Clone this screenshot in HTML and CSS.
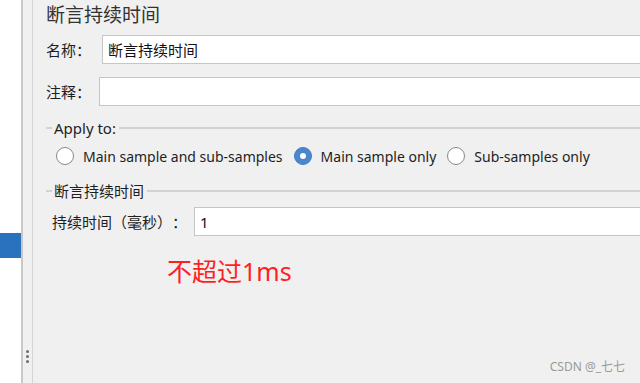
FILE: index.html
```html
<!DOCTYPE html>
<html lang="zh-CN">
<head>
  <meta charset="UTF-8">
  <title>断言持续时间</title>
  <link rel="stylesheet" href="styles.css">
</head>
<body>
  <div class="frame">
    <div class="tree">
      <div class="tree-sel"></div>
    </div>
    <div class="split">
      <span class="dot"></span><span class="dot"></span><span class="dot"></span>
    </div>
    <div class="panel">
      <h1 class="title">断言持续时间</h1>

      <div class="row name-row">
        <label class="label">名称：</label>
        <input class="field" type="text" value="断言持续时间">
      </div>
      <div class="row comment-row">
        <label class="label">注释：</label>
        <input class="field" type="text" value="">
      </div>

      <div class="group apply">
        <div class="group-title"><span class="tick"></span><span class="legend">Apply to:</span><span class="rule"></span></div>
        <div class="radios">
          <span class="radio"></span><span class="radio-text">Main sample and sub-samples</span>
          <span class="radio checked"></span><span class="radio-text">Main sample only</span>
          <span class="radio"></span><span class="radio-text">Sub-samples only</span>
        </div>
      </div>

      <div class="group duration">
        <div class="group-title"><span class="tick"></span><span class="legend cjk">断言持续时间</span><span class="rule"></span></div>
        <div class="row dur-row">
          <label class="label">持续时间（毫秒）：</label>
          <input class="field" type="text" value="1">
        </div>
      </div>

      <div class="note">不超过1ms</div>
    </div>
  </div>
  <div class="mark">CSDN @_七七</div>
</body>
</html>
```

FILE: styles.css
```css
html, body {
  margin: 0;
  height: 383px;
  overflow: hidden;
}

body {
  background: #f0f0f0;
  color: #1e1e1e;
  font-family: "Noto Sans", "Noto Sans CJK SC", sans-serif;
  font-size: 15px;
}

.frame {
  display: flex;
  height: 383px;
}

.tree {
  width: 21px;
  background: #fff;
  border-right: 2px solid #c9c9c9;
}

.tree-sel {
  margin-top: 233px;
  height: 25px;
  background: #2a72bd;
}

.split {
  width: 10px;
  border-right: 1px solid #d4d4d4;
  display: flex;
  flex-direction: column;
  align-items: center;
  gap: 2px;
  padding-top: 350px;
  box-sizing: border-box;
}

.dot {
  width: 3px;
  height: 3px;
  border-radius: 50%;
  background: #6e6e6e;
}

.panel {
  flex: 1;
  padding-left: 13px;
  overflow: hidden;
}

.title {
  margin: 0;
  font-family: "Noto Sans CJK SC", sans-serif;
  font-size: 19px;
  font-weight: normal;
  line-height: 27px;
  color: #333;
}

.row {
  display: flex;
  align-items: center;
}

.label, .cjk {
  flex: none;
  font-family: "Noto Sans CJK SC", sans-serif;
  font-size: 15px;
  text-spacing-trim: space-all;
}

.field {
  flex: 1;
  height: 29px;
  box-sizing: border-box;
  border: 1px solid #c6c6c6;
  border-right: none;
  background: #fff;
  font-family: "Noto Sans", "Noto Sans CJK SC", sans-serif;
  font-size: 15px;
  color: #111;
  padding: 0 0 0 5px;
  outline: none;
}

.name-row { margin-top: 8px; }
.name-row .label { width: 56px; }

.comment-row { margin-top: 13px; }
.comment-row .label { width: 53px; }

.group-title {
  display: flex;
  align-items: center;
  height: 18px;
}

.tick {
  width: 6px;
  height: 2px;
  background: #d2d2d2;
}

.rule {
  flex: 1;
  height: 2px;
  background: #d2d2d2;
}

.legend {
  padding: 0 3px 0 2px;
  line-height: 18px;
}

.apply { margin-top: 13px; }
.duration { margin-top: 17px; }

.radios {
  display: flex;
  align-items: center;
  margin-top: 10px;
  padding-left: 10px;
  height: 18px;
  font-size: 14px;
}

.radio {
  width: 18px;
  height: 18px;
  box-sizing: border-box;
  border: 1px solid #8a8a8a;
  border-radius: 50%;
  background: #fff;
  margin-right: 9px;
  display: flex;
  align-items: center;
  justify-content: center;
}

.radio.checked {
  border-color: #3f7fc6;
  background: #4a88cb;
}

.radio.checked::after {
  content: "";
  width: 6px;
  height: 6px;
  border-radius: 50%;
  background: #fff;
}

.radio-text {
  margin-right: 11px;
  white-space: nowrap;
}

.dur-row {
  margin-top: 7px;
  padding-left: 6px;
}

.dur-row .label { width: 142px; }

.note {
  margin-top: 21px;
  margin-left: 121px;
  color: #ff1f1f;
  font-size: 25px;
  line-height: 28px;
}

.mark {
  position: absolute;
  right: 15px;
  bottom: 8px;
  font-size: 12px;
  color: #9a9a9a;
}
```
